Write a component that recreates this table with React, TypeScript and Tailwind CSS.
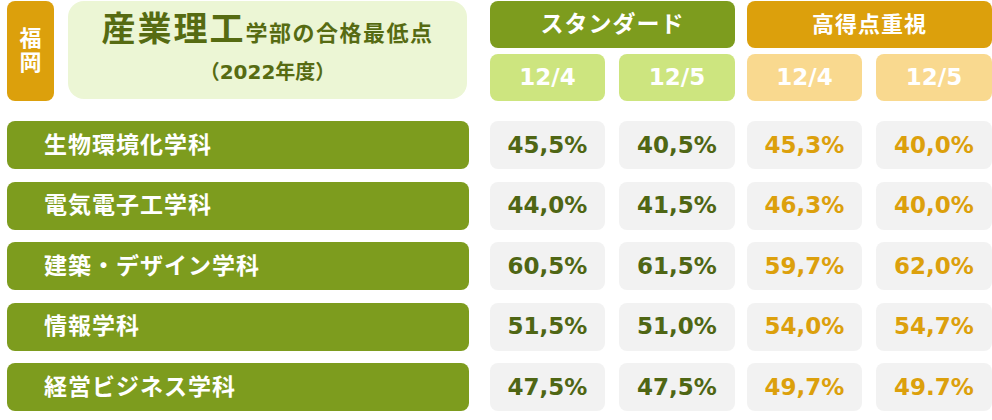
const font = { fontFamily: '"DejaVu Sans", "Noto Sans CJK JP", sans-serif' }

const rows = [
  { name: '生物環境化学科', std: ['45,5%', '40,5%'], high: ['45,3%', '40,0%'] },
  { name: '電気電子工学科', std: ['44,0%', '41,5%'], high: ['46,3%', '40,0%'] },
  { name: '建築・デザイン学科', std: ['60,5%', '61,5%'], high: ['59,7%', '62,0%'] },
  { name: '情報学科', std: ['51,5%', '51,0%'], high: ['54,0%', '54,7%'] },
  { name: '経営ビジネス学科', std: ['47,5%', '47,5%'], high: ['49,7%', '49.7%'] },
]

function Cell({ value, orange, w }: { value: string; orange?: boolean; w: string }) {
  return (
    <div
      className={`${w} h-[48px] rounded-[8px] bg-[#f2f2f2] flex items-center justify-center text-[23px] font-bold ${
        orange ? 'text-[#dca00c]' : 'text-[#4f6614]'
      }`}
    >
      {value}
    </div>
  )
}

export default function App() {
  return (
    <div className="w-[992px] h-[420px] bg-white pl-[7px] pt-[1px]" style={font}>
      {/* header */}
      <div className="flex">
        <div className="w-[47px] h-[100px] rounded-[8px] bg-[#dca00c] flex flex-col items-center justify-center text-white font-bold text-[22px] leading-[24px]">
          <span>福</span>
          <span>岡</span>
        </div>
        <div className="ml-[14px] w-[399px] h-[98px] rounded-[16px] bg-[#ecf6d5] flex flex-col items-center pt-[8px] text-[#566b12] font-bold">
          <div className="flex items-baseline">
            <span className="text-[34px] tracking-[2px] leading-[40px]">産業理工</span>
            <span className="text-[22px] tracking-[1.5px]">学部の合格最低点</span>
          </div>
          <div className="text-[20px] mt-[9px] leading-[26px]">（2022年度）</div>
        </div>
        <div className="ml-[23px] flex flex-col gap-[6px]">
          <div className="w-[245px] h-[47px] rounded-[8px] bg-[#7d9c1e] text-white font-bold text-[23px] tracking-[1px] flex items-center justify-center">
            スタンダード
          </div>
          <div className="flex gap-[14px]">
            <div className="w-[115px] h-[47px] rounded-[8px] bg-[#cde57f] text-white font-bold text-[23px] flex items-center justify-center">12/4</div>
            <div className="w-[116px] h-[47px] rounded-[8px] bg-[#cde57f] text-white font-bold text-[23px] flex items-center justify-center">12/5</div>
          </div>
        </div>
        <div className="ml-[12px] flex flex-col gap-[6px]">
          <div className="w-[245px] h-[47px] rounded-[8px] bg-[#dca00c] text-white font-bold text-[22px] tracking-[1px] flex items-center justify-center">
            高得点重視
          </div>
          <div className="flex gap-[14px]">
            <div className="w-[115px] h-[47px] rounded-[8px] bg-[#f9d98f] text-white font-bold text-[23px] flex items-center justify-center">12/4</div>
            <div className="w-[116px] h-[47px] rounded-[8px] bg-[#f9d98f] text-white font-bold text-[23px] flex items-center justify-center">12/5</div>
          </div>
        </div>
      </div>

      {/* rows */}
      <div className="mt-[20px] flex flex-col gap-[12.5px]">
        {rows.map((r) => (
          <div key={r.name} className="flex">
            <div className="w-[462px] h-[48px] rounded-[8px] bg-[#7d9c1e] flex items-center pl-[37px] text-white font-bold text-[23px] tracking-[1px]">
              {r.name}
            </div>
            <div className="ml-[21px] flex gap-[14px]">
              <Cell value={r.std[0]} w="w-[115px]" />
              <Cell value={r.std[1]} w="w-[116px]" />
            </div>
            <div className="ml-[12px] flex gap-[14px]">
              <Cell value={r.high[0]} orange w="w-[115px]" />
              <Cell value={r.high[1]} orange w="w-[116px]" />
            </div>
          </div>
        ))}
      </div>
    </div>
  )
}
